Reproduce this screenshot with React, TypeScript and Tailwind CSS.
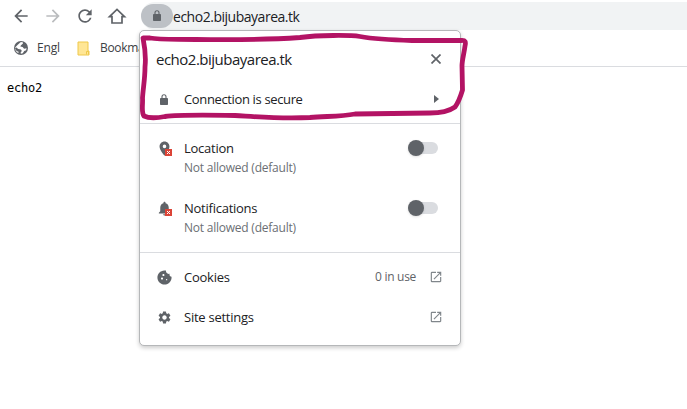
import type { ReactNode } from "react";
import {
  MdArrowBack,
  MdArrowForward,
  MdCookie,
  MdLocationOn,
  MdNotifications,
  MdOpenInNew,
  MdRefresh,
  MdSettings,
} from "react-icons/md";

function BlockedBadge() {
  return (
    <svg viewBox="0 0 7 7" className="absolute left-[9px] top-[9px] size-[7px] bg-[#db4437]">
      <path d="M2 2l3 3M5 2L2 5" stroke="#fff" strokeWidth="1" />
    </svg>
  );
}

function LockIcon() {
  return (
    <svg viewBox="0 0 8 11" className="h-[11px] w-2" fill="none">
      <path d="M2 5V2.800a2 2 0 0 1 4 0V5" stroke="#5f6368" strokeWidth="1.100" />
      <rect y="4" width="8" height="7" rx="0.800" fill="#5f6368" />
    </svg>
  );
}

function HomeIcon() {
  return (
    <svg viewBox="0 0 20 20" className="size-5" fill="none">
      <path d="M2.500 10.700L10 3.500l7.500 7.200H15v6.300H5v-6.300z" stroke="#5f6368" strokeWidth="1.700" />
    </svg>
  );
}

function GlobeIcon() {
  return (
    <svg viewBox="0 0 16 16" className="size-4">
      <circle cx="8" cy="8" r="7" fill="#5f6368" />
      <path
        d="M7.500 2.300L9.500 2l.5 1.500L8 5.200 7.300 6.600 9.600 7l1.500 1.700 2.500-.4-.5 2-1.900.6-1.400 2.300-1.900.6-.3-1.400 1.200-1.500L8 9.600 5.300 8.900 3 7.200 2.200 8.600 3.600 11l2 .7-.2 1.400C3 12 2 9.500 2.100 7.400L4.500 5z"
        fill="#fff"
      />
    </svg>
  );
}

function Permission({ icon, label }: { icon: ReactNode; label: string }) {
  return (
    <div className="flex h-[60px] items-start pl-4 pr-[22px] pt-[14px]">
      <span className="relative mt-[2px] size-4 text-[#5f6368]">
        {icon}
        <BlockedBadge />
      </span>
      <div className="ml-3 flex-1">
        <div className="text-[13px] leading-5 tracking-[-0.25px] text-[#202124]">{label}</div>
        <div className="text-[12px] leading-[19px] tracking-[-0.23px] text-[#6b6f74]">Not allowed (default)</div>
      </div>
      <span className="relative mt-1 h-3 w-[30px] rounded-full bg-[#dadce0]">
        <span className="absolute -top-0.5 left-0 size-4 rounded-full bg-[#5f6368] shadow-sm" />
      </span>
    </div>
  );
}

function LinkRow({ icon, label, detail }: { icon: ReactNode; label: string; detail?: string }) {
  return (
    <div className="flex h-10 items-center pl-4 pr-[17px] text-[#5f6368]">
      <span className="flex w-4 justify-center">{icon}</span>
      <span className="ml-3 flex-1 pt-px text-[13px] tracking-[-0.25px] text-[#202124]">{label}</span>
      {detail && <span className="mr-[13px] text-[12px] tracking-[-0.3px]">{detail}</span>}
      <MdOpenInNew className="size-[14px] text-[#80868b]" />
    </div>
  );
}

export default function App() {
  return (
    <div className="relative h-[409px] w-[687px] overflow-hidden bg-white font-['Open_Sans',sans-serif]">
      <header className="h-[67px] border-b border-[#dadce0]">
        <div className="flex h-[30px] pt-0.5 text-[#5f6368]">
          <div className="flex w-[141px] shrink-0 items-center gap-3 pl-[11px]">
            <MdArrowBack className="size-5" />
            <MdArrowForward className="size-5 text-[#babcbe]" />
            <MdRefresh className="size-5" />
            <HomeIcon />
          </div>
          <div className="flex flex-1 items-center rounded-l-full bg-[#f1f3f4]">
            <span className="flex h-6 w-8 items-center justify-center rounded-full bg-[#bdc1c6] pb-px">
              <LockIcon />
            </span>
            <span className="text-[14px] tracking-[-0.48px] text-[#202124]">echo2.bijubayarea.tk</span>
          </div>
        </div>
        <div className="flex h-[36px] items-center pl-[13px] text-[12px] text-[#3c4043]">
          <GlobeIcon />
          <span className="ml-2 w-[40px] tracking-[-0.2px]">Engl</span>
          <svg viewBox="0 0 13 15" className="h-[15px] w-[13px]">
            <path d="M1 1h10v9h1v4H1z" fill="#ffe695" stroke="#efc84a" />
            <path d="M9.5 13.5v-3h2v3" fill="none" stroke="#efc84a" />
          </svg>
          <span className="ml-[10px] tracking-[-0.3px]">Bookmarks</span>
        </div>
      </header>
      <main className="pl-[7px] pt-[13px] font-['DejaVu_Sans_Mono',monospace] text-[12px] leading-4 tracking-[-0.2px] text-black">
        echo2
      </main>

      <section className="absolute left-[139px] top-[30px] h-[316px] w-[322px] rounded-[5px] border border-[#b5b7b9] bg-white shadow-[0_2px_4px_rgba(0,0,0,0.2)]">
        <div className="flex h-[49px] items-center justify-between pl-4 pr-[19px] pt-[8px]">
          <h1 className="text-[15px] tracking-[-0.5px] text-[#202124]">echo2.bijubayarea.tk</h1>
          <svg viewBox="0 0 10 10" className="mb-px size-[10px]">
            <path d="M0.500 0.500l9 9M9.500 0.500l-9 9" stroke="#5f6368" strokeWidth="1.700" />
          </svg>
        </div>
        <div className="flex h-[44px] items-center border-b border-[#dadce0] pb-[5px] pl-4 pr-[21px]">
          <span className="flex w-4 justify-center">
            <LockIcon />
          </span>
          <span className="ml-3 flex-1 pt-px text-[13px] tracking-[-0.36px] text-[#202124]">Connection is secure</span>
          <svg viewBox="0 0 5 8" className="h-2 w-[5px]">
            <path d="M0 0l5 4-5 4z" fill="#5f6368" />
          </svg>
        </div>
        <div className="h-[129px] border-b border-[#dadce0]">
          <Permission icon={<MdLocationOn className="size-[17px]" />} label="Location" />
          <Permission icon={<MdNotifications className="size-[17px]" />} label="Notifications" />
        </div>
        <div className="pt-1">
          <LinkRow icon={<MdCookie className="size-[17px] shrink-0" />} label="Cookies" detail="0 in use" />
          <LinkRow icon={<MdSettings className="size-[15px]" />} label="Site settings" />
        </div>
      </section>

      <svg className="pointer-events-none absolute left-0 top-0" width="687" height="409" fill="none">
        <path
          d="M143 38H150C160 40 178 39 196 39.500C230 40 278 39 300 37.500C319 35 350 35 360 36.500C374 39 393 40 412 40.500L461 40.500C465.500 40 466 42 465 46C464 54 462 60 462 66L462.500 90C461 95 458 103 455 107C448 112 440 113 430 113L355 114C340 117 325 116 310 117.500C280 119 259 117 235 115.500C208 115 176 115 165 116.500C157 118 148 118 144 116C141 112 143 105 142.500 98C143 89 145 79 145 67C146 58 145 48 143 38Z"
          stroke="#b31364"
          strokeWidth="4.800"
          strokeLinejoin="round"
        />
      </svg>
    </div>
  );
}
